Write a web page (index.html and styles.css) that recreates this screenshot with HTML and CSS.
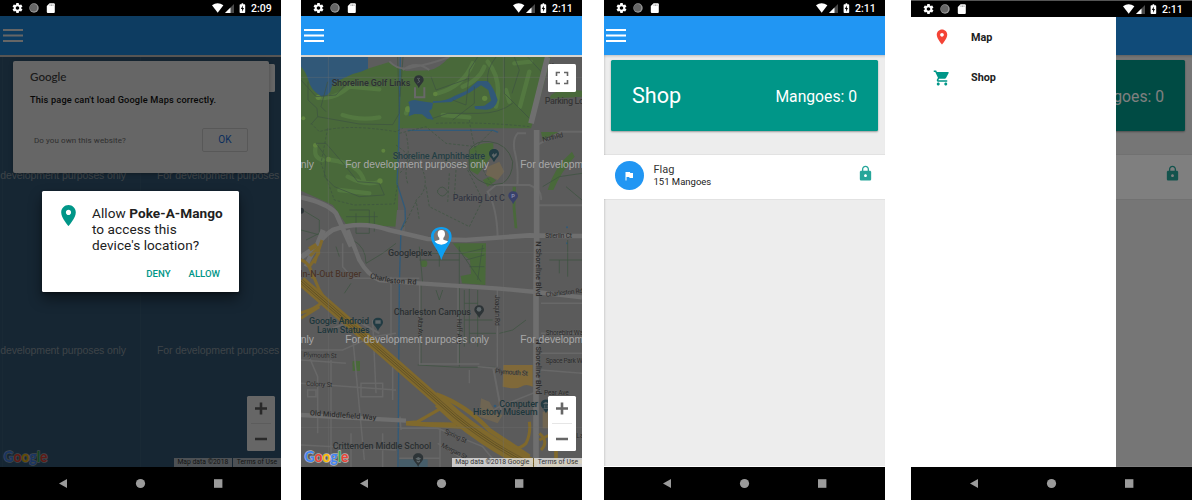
FILE: index.html
```html
<!DOCTYPE html>
<html lang="en">
<head>
<meta charset="utf-8">
<title>Poke-A-Mango</title>
<link rel="stylesheet" href="styles.css">
</head>
<body>
<svg class="defs" width="0" height="0" aria-hidden="true">
  <symbol id="gear" viewBox="0 0 24 24"><path d="M19.43 12.98c.04-.32.07-.64.07-.98s-.03-.66-.07-.98l2.11-1.65c.19-.15.24-.42.12-.64l-2-3.46c-.12-.22-.39-.3-.61-.22l-2.49 1c-.52-.4-1.08-.73-1.69-.98l-.38-2.65C14.46 2.18 14.25 2 14 2h-4c-.25 0-.46.18-.49.42l-.38 2.65c-.61.25-1.17.59-1.69.98l-2.49-1c-.23-.09-.49 0-.61.22l-2 3.46c-.13.22-.07.49.12.64l2.11 1.65c-.04.32-.07.65-.07.98s.03.66.07.98l-2.11 1.65c-.19.15-.24.42-.12.64l2 3.46c.12.22.39.3.61.22l2.49-1c.52.4 1.08.73 1.69.98l.38 2.65c.03.24.24.42.49.42h4c.25 0 .46-.18.49-.42l.38-2.65c.61-.25 1.17-.59 1.69-.98l2.49 1c.23.09.49 0 .61-.22l2-3.46c.12-.22.07-.49-.12-.64l-2.11-1.65zM12 15.5c-1.93 0-3.5-1.57-3.5-3.5s1.57-3.5 3.5-3.5 3.5 1.57 3.5 3.5-1.57 3.5-3.5 3.5z"/></symbol>
  <symbol id="status-left" viewBox="0 0 60 16">
    <use href="#gear" x="11.5" y="2" width="12" height="12" fill="#fff"/>
    <circle cx="34" cy="8" r="4.700" fill="#9a9a9a"/><circle cx="33.600" cy="7.800" r="3.700" fill="#666"/>
    <path d="M49.600 3.200h4.200q1 0 1 1v7.800q0 1-1 1h-6q-1 0-1-1V6z" fill="#fff"/>
    <path d="M50 4.400v1.600M51.500 4.400v1.600M53 4.400v1.600" stroke="#777" stroke-width=".6"/>
  </symbol>
  <symbol id="status-right" viewBox="0 0 38 16">
    <path d="M0 5.200Q5.600 1.400 11.400 5.200L5.700 12.800z" fill="#fff"/>
    <path d="M13 13L22 4v9z" fill="#4a4a4a"/><path d="M13 13L18.500 7.500V13z" fill="#fff"/>
    <path d="M29.600 3.200h1.600v1h1.200q.8 0 .8.8v7.200q0 .8-.8.8h-4q-.8 0-.8-.8V5q0-.8.8-.8h1.200z" fill="#fff"/>
    <path d="M30.900 5.400L28.800 9h1.300v2.700L32 8h-1.200z" fill="#000"/>
  </symbol>
  <symbol id="place" viewBox="0 0 24 24"><path d="M12 2C8.13 2 5 5.13 5 9c0 5.25 7 13 7 13s7-7.75 7-13c0-3.87-3.13-7-7-7zm0 9.5c-1.38 0-2.5-1.12-2.5-2.5s1.12-2.5 2.5-2.5 2.5 1.12 2.5 2.5-1.12 2.5-2.5 2.5z"/></symbol>
  <symbol id="cart" viewBox="0 0 24 24"><path d="M7 18c-1.1 0-1.99.9-1.99 2S5.9 22 7 22s2-.9 2-2-.9-2-2-2zM1 2v2h2l3.6 7.59-1.35 2.45c-.16.28-.25.61-.25.96 0 1.1.9 2 2 2h12v-2H7.42c-.14 0-.25-.11-.25-.25l.03-.12.9-1.63h7.45c.75 0 1.41-.41 1.75-1.03l3.58-6.49c.08-.14.12-.31.12-.48 0-.55-.45-1-1-1H5.21l-.94-2H1zm16 16c-1.1 0-1.99.9-1.99 2s.89 2 1.99 2 2-.9 2-2-.9-2-2-2z"/></symbol>
  <symbol id="lock" viewBox="0 0 24 24"><path d="M18 8h-1V6c0-2.76-2.24-5-5-5S7 3.24 7 6v2H6c-1.1 0-2 .9-2 2v10c0 1.1.9 2 2 2h12c1.1 0 2-.9 2-2V10c0-1.1-.9-2-2-2zm-6 9c-1.1 0-2-.9-2-2s.9-2 2-2 2 .9 2 2-.9 2-2 2zm3.1-9H8.9V6c0-1.71 1.39-3.1 3.1-3.1 1.71 0 3.1 1.39 3.1 3.1v2z"/></symbol>
  <symbol id="flag" viewBox="0 0 24 24"><path d="M14.4 6L14 4H5v17h2v-7h5.6l.4 2h7V6z"/></symbol>
  <symbol id="menu" viewBox="0 0 20 14"><path d="M0 1h20M0 6.5h20M0 12h20" stroke="#fff" stroke-width="2"/></symbol>
  <symbol id="nav" viewBox="0 0 281 33">
    <path d="M59 16.500L67 12v9z"/><circle cx="140.500" cy="16.500" r="4.600"/><path d="M214 12.200h8.400v8.600h-8.400z"/>
  </symbol>
  <symbol id="pin" viewBox="0 0 32 40"><path d="M16 0C7 0 1 6 1 14C1 23 11 27 16 40C21 27 31 23 31 14C31 6 25 0 16 0z"/></symbol>
</svg>

<main class="gallery">

  <section class="phone phone-permission">
    <header class="status"><svg class="status-left"><use href="#status-left"/></svg><svg class="status-right"><use href="#status-right"/></svg><span class="clock">2:09</span></header>
    <div class="screen">
      <div class="appbar"><svg class="menu"><use href="#menu"/></svg></div>
      <div class="map map-blank">
        <svg class="map-art" viewBox="0 57 281 410">
          <path d="M2.500 57v410M140.500 57v410" stroke="#456b8b" stroke-width=".6"/>
          <g class="watermark">
            <text x="-18" y="178.500" textLength="144">For development purposes only</text>
            <text x="157" y="178.500" textLength="144">For development purposes only</text>
            <text x="-18" y="353.500" textLength="144">For development purposes only</text>
            <text x="157" y="353.500" textLength="144">For development purposes only</text>
          </g>
        </svg>
        <div class="control fullscreen"></div>
        <div class="control zoomer"><svg viewBox="0 0 28 55"><path d="M8 12.500h12M14 6.500v12M8 43h12" stroke="#666" stroke-width="2.600"/><path d="M4 27.500h20" stroke="#e6e6e6"/></svg></div>
        <div class="error">
          <div class="error-brand">Google</div>
          <div class="error-title">This page can't load Google Maps correctly.</div>
          <div class="error-foot"><span>Do you own this website?</span><span class="ok">OK</span></div>
        </div>
        <svg class="logo" viewBox="0 0 48 20"><text x="1.500" y="14.500" textLength="44" lengthAdjust="spacingAndGlyphs"><tspan fill="#4285f4">G</tspan><tspan fill="#ea4335">o</tspan><tspan fill="#fbbc05">o</tspan><tspan fill="#4285f4">g</tspan><tspan fill="#34a853">l</tspan><tspan fill="#ea4335">e</tspan></text></svg>
        <div class="legal"><span>Map data ©2018</span><span>Terms of Use</span></div>
      </div>
      <div class="shade shade-deep">
        <div class="permission">
          <svg class="permission-icon"><use href="#place"/></svg>
          <p class="question">Allow <b>Poke-A-Mango</b><br>to access this<br>device's location?</p>
          <div class="actions"><span>DENY</span><span>ALLOW</span></div>
        </div>
      </div>
    </div>
    <footer class="navbar"><svg><use href="#nav"/></svg></footer>
  </section>

  <section class="phone phone-map">
    <header class="status"><svg class="status-left"><use href="#status-left"/></svg><svg class="status-right"><use href="#status-right"/></svg><span class="clock">2:11</span></header>
    <div class="screen">
      <div class="appbar"><svg class="menu"><use href="#menu"/></svg></div>
      <div class="map">
        <svg class="map-art" viewBox="15 171 843 1230">
          <rect x="15" y="171" width="843" height="1230" fill="#5b5b5b"/>
          <!-- parks -->
          <g fill="#49693a">
            <path d="M15 171H765L735 285L705 385H310L305 680L150 672L110 615L15 572z"/>
            <path d="M765 285Q790 265 858 272V290L760 296z"/>
            <path d="M522 450Q550 425 592 430L592 462L545 524L524 512Q512 480 522 450zM560 540L585 528L600 542L575 560z"/>
            <path d="M650 560h10l-2 60 6 65h-8l-6-60zM755 570Q775 500 828 455L836 470Q795 515 772 570z"/>
            <path d="M470 730H570L568 855L498 850L494 828L525 822L522 780L495 760z"/>
            <path d="M735 396H790L740 420zM170 1083h22v30h-22z"/>
            <circle cx="384" cy="791" r="10"/><circle cx="180" cy="1092" r="10"/>
          </g>
          <path d="M303 630h24v65h-30z" fill="#606060"/>
          <path d="M215 171H460Q430 205 400 211L330 213Q300 200 280 186L215 206z" fill="#5d5d5d"/>
          <g fill="none" stroke="#537840" stroke-width="13" stroke-linecap="round">
            <path d="M70 293Q115 300 160 260L250 268M140 345Q190 362 250 352M425 280Q500 260 530 190M565 200Q550 240 500 260M575 185Q620 240 600 320M700 215L672 320M655 190L705 185M60 435Q50 475 80 480M105 480Q190 490 205 545M130 570L220 580M155 530Q210 560 250 545M330 340L335 325M440 345L520 352M630 270L640 305"/>
          </g>
          <g fill="#5f843f"><circle cx="67" cy="292" r="8"/><circle cx="336" cy="328" r="9"/><circle cx="566" cy="295" r="8"/><circle cx="58" cy="436" r="7"/><circle cx="97" cy="478" r="8"/><circle cx="252" cy="543" r="8"/><circle cx="418" cy="282" r="7"/><circle cx="22" cy="355" r="6"/><circle cx="262" cy="452" r="6"/></g>
          <!-- water -->
          <g fill="#315878">
            <path d="M15 171H216V206Q200 214 170 222L125 243Q105 255 103 275Q85 298 70 285Q45 270 38 243Q30 215 15 200z"/>
            <path d="M337 306Q350 296 368 302L392 306L411 308L408 326L399 333L413 359L394 356L378 343L356 342L338 349Q345 325 337 306z"/>
            <path d="M411 303Q450 305 475 288L510 273L545 243L575 243Q595 265 605 300Q598 330 570 329L538 327L535 319L565 317L586 302L577 270L555 256L520 278L465 306L411 309z"/>
          </g>
          <path d="M313 171L308 440L303 550L327 625L328 660L315 690L310 850L306 1401" fill="none" stroke="#315a79" stroke-width="4"/>
          <path d="M335 391H592L606 397" stroke="#315a79" stroke-width="4" fill="none"/>
          <g fill="#315a79"><circle cx="813" cy="682" r="3"/><circle cx="813" cy="730" r="3"/><circle cx="597" cy="1218" r="4"/></g>
          <!-- trails -->
          <g fill="none" stroke="#3e5340" stroke-width="2.200">
            <path d="M36 245V300L63 325L65 350L45 373M65 350L190 372L290 374L310 340L305 171M95 245L75 320L90 335M15 240L60 290L120 285L160 240M321 171L312 290M470 300L510 315L520 210L545 171M405 230L420 270L520 235M535 260L535 310L470 360M600 171Q570 210 575 245M625 171V280L705 360M655 171L670 210L648 280M695 171L745 225L715 330M410 355L455 340L550 340Q610 340 650 310"/>
            <path stroke-dasharray="8 5" d="M45 370L70 395Q150 370 300 395L320 385M95 385L75 490L115 600L175 615L295 612L305 550M310 400L390 380L450 430L540 440L590 390M330 400Q350 490 310 520M300 435L370 490Q410 560 360 600L370 660M390 560L400 620L520 680L560 600L510 500L440 480M460 520L455 610M480 510L475 590M520 360Q540 500 595 560M420 370Q560 365 700 380M335 550Q320 500 350 470M360 605L320 685"/>
            <path d="M425 570Q440 550 455 575Q440 600 425 578zM160 630L220 630V700H180V640M235 635v60M150 650h95M60 430L90 470L85 530L115 560L190 590L265 585L250 550L185 545L150 500L90 430z"/>
            <path d="M170 720Q210 740 210 790L260 760L300 730M370 740L380 850M395 760H500M370 780H490M430 750V800M490 740V1100M375 850V1095M420 870L430 900L440 870M505 870V1040M520 860V1030M545 870V1040M505 910H545M505 960H590M520 1000H600M560 735L545 840M500 760L565 745M510 780L565 765M520 800L565 800M490 750L555 845M20 630L70 660V700L30 720M15 690L90 710M120 740L130 770M145 880L165 850M610 1000L650 990L690 960M760 780H858M815 720V830M790 780V820M740 560L790 530L858 520M810 560L858 600M365 1095L490 1102H598"/>
          </g>
          <!-- local roads -->
          <g fill="none" stroke="#686868" stroke-width="6">
            <path d="M280 184Q310 215 350 202Q410 190 460 171M320 210Q360 180 400 210M357 262v30h28v-30"/>
            <path d="M690 400H665Q650 415 655 450Q668 500 664 555H600L575 575Q602 620 605 710M722 436L795 395H858M664 555H700Q740 570 735 600M722 616H858"/>
            <path d="M371 852V1092H550M486 855V1095M604 870V1100M140 730V800L170 835H370M285 830V1030M15 1050H140L230 1010L300 1000M15 1080L150 1090M170 1010L205 1380M230 960L240 1180M15 1150L300 1170M105 1080V1401M35 1060L65 1130V1300M195 1190H260V1150H195zM35 1170h25v20H35zM290 1080V1200M600 1105L545 1100M315 1285H425L560 1340L610 1401M432 1285V1401M425 1330L540 1401M315 1290L312 1250M520 1110V1150M735 1170L610 1220L560 1250M735 910H858M735 1000H858M735 1060H858M735 1110L858 1120M310 1375H430M15 1335L300 1350M165 1300V1401M260 1300V1401" stroke-width="4.500"/>
            <path d="M592 1105L615 1230M110 985L180 960L250 1000"/>
          </g>
          <g fill="none" stroke="#6f6f6f" stroke-width="14">
            <path d="M15 592Q95 610 120 640L165 740M30 800Q60 720 110 690Q190 660 280 690L395 717L510 720L700 706L810 708H858"/>
            <path d="M755 171L705 370M722 390V720L720 880V1401" stroke-width="17"/>
            <path d="M155 690L190 780Q215 825 250 840L370 850L600 865L720 876L858 892M15 1245L330 1262" stroke-width="13"/>
            <path d="M15 772L62 740L82 690" stroke-width="16"/>
          </g>
          <!-- buildings -->
          <g fill="#78694f"><path d="M575 500L610 485L625 515L605 540L570 525z" opacity=".7"/><path d="M622 1095H710V1160Q690 1150 675 1160Q660 1170 620 1160z" fill="#806939"/><path d="M555 1195L580 1205L600 1240L620 1245L605 1270L550 1250z" opacity=".7"/><path d="M740 1235h30v50h-30z" opacity=".8"/></g>
          <path d="M520 450Q540 420 580 425Q635 430 650 485Q650 530 620 550L585 555Q540 545 520 510z" fill="none" stroke="#3e5340" stroke-width="2.500"/>
          <path d="M310 1378h85v23h-85z" fill="#465d69"/>
          <!-- freeway -->
          <g fill="none" stroke="#80692c" stroke-width="9">
            <path d="M42 768L68 742L68 760L40 800L70 870L110 935M15 780Q45 790 50 835M15 938Q55 930 80 905M15 955L70 920M78 720L55 790"/>
            <path d="M330 1268L365 1265L440 1222M330 1270L480 1272M330 1272L545 1285M700 1265Q705 1300 690 1330Q670 1350 640 1345M730 1300Q760 1325 735 1350M730 1320L760 1305"/>
            <path d="M40 748L62 735" stroke-width="14"/>
            <path d="M15 843L330 1118L480 1250Q590 1340 720 1401" stroke-width="29"/>
            <path d="M420 1183Q510 1215 580 1290L700 1370" stroke-width="13"/>
            <path d="M430 1205L480 1250Q590 1340 720 1401" stroke-width="40"/>
            <path d="M15 843L330 1118L480 1250Q590 1340 720 1401" stroke="#66562a" stroke-width="14"/>
            <path d="M15 843L330 1118L480 1250Q590 1340 720 1401" stroke="#80692c" stroke-width="9"/>
            <path d="M15 843L330 1118L480 1250Q590 1340 720 1401" stroke="#5d4f25" stroke-width="3"/>
            <path d="M735 1400L858 1385M780 1350V1401" stroke-width="11"/>
          </g>
          <path d="M97 171V1401M622 171V1401M15 232H858M15 757H858M15 1282H858" stroke="#727272" stroke-width="1.500" opacity=".7"/>
          <!-- places -->
          <g fill="#2d3437">
            <use href="#pin" x="353" y="225" width="31" height="40"/>
            <use href="#pin" x="578" y="446" width="32" height="42" fill="#213b43"/><use href="#pin" x="636" y="572" width="31" height="42" fill="#39406a"/>
            <use href="#pin" x="534" y="914" width="31" height="42"/><use href="#pin" x="230" y="952" width="32" height="42" fill="#213b43"/>
            <use href="#pin" x="733" y="1198" width="34" height="43" fill="#213b43"/><use href="#pin" x="350" y="1359" width="33" height="42"/>
            <circle cx="15" cy="632" r="9"/><path d="M420 750l12 12v-22z"/>
          </g>
          <g fill="#5e676a"><circle cx="549" cy="928" r="7"/><path d="M587 465l7-6v5l8-6v8l-9 8zM238 961h16v10h-16zM742 1213h16v-3l-8-5-8 5zm2 3h2v7h-2zm5 0h2v7h-2zm5 0h2v7h-2zm-12 8h16v2h-16zM358 1376l9-5 9 5-9 5zm4 5l5 3 5-3v4l-5 3-5-3z"/><path d="M363 235h8l-5 5 6 4-8 5" fill="none" stroke="#687070" stroke-width="2"/></g>
          <text x="646" y="593" font-family="Roboto, sans-serif" font-size="17" font-weight="700" fill="#858aab">P</text>
          <g class="place-names">
            <text x="107" y="257" textLength="236">Shoreline Golf Links</text>
            <text x="290" y="477" textLength="277" fill="#243e44">Shoreline Amphitheatre</text>
            <text x="470" y="603" textLength="157" fill="#343743">Parking Lot C</text>
            <text x="746" y="312" textLength="118" fill="#353535">Parking Lo</text>
            <text x="276" y="768" textLength="132">Googleplex</text>
            <text x="12" y="831" textLength="184" fill="#49352b">In-N-Out Burger</text>
            <text x="293" y="946" textLength="232">Charleston Campus</text>
            <text x="39" y="971" textLength="180" fill="#1d363b">Google Android</text>
            <text x="63" y="998" textLength="158" fill="#1d363b">Lawn Statues</text>
            <text x="610" y="1220" textLength="116" fill="#1d363b">Computer</text>
            <text x="531" y="1245" textLength="194" fill="#1d363b">History Museum</text>
            <text x="110" y="1347" textLength="296">Crittenden Middle School</text>
          </g>
          <g class="street-names">
            <text class="major" transform="translate(221 834) rotate(13)" textLength="62">Charle</text>
            <text class="major" transform="translate(281 849) rotate(3)" textLength="80">ston Rd</text>
            <text class="major" transform="translate(41 1246) rotate(4)" textLength="200">Old Middlefield Way</text>
            <text class="major" transform="translate(719 724) rotate(90)" textLength="165">N Shoreline Blvd</text>
            <text class="major" transform="translate(719 1018) rotate(90)" textLength="165">N Shoreline Blvd</text>
            <text transform="translate(741 425) rotate(-13)" textLength="63">North Rd</text>
            <text x="748" y="713" textLength="80">Stierlin Ct</text>
            <text transform="translate(750 890) rotate(-6)" textLength="112">Charleston Rd</text>
            <text transform="translate(598 885) rotate(90)" textLength="92">Joaquin Rd</text>
            <text transform="translate(365 950) rotate(90)" textLength="65">Alta Ave</text>
            <text transform="translate(482 957) rotate(90)" textLength="76">Huff Ave</text>
            <text x="749" y="1006" textLength="112">Shorebird Wa</text>
            <text x="749" y="1089" textLength="111">Space Park W</text>
            <text transform="translate(22 1071) rotate(2)" textLength="100">Plymouth St</text>
            <text transform="translate(30 1157) rotate(3)" textLength="79">Colony St</text>
            <text transform="translate(597 1120) rotate(4)" textLength="98">Plymouth St</text>
            <text x="744" y="1184" textLength="74">Pear Ave</text>
            <text transform="translate(444 1298) rotate(26)" textLength="72">Spring St</text>
            <text transform="translate(434 1340) rotate(27)" textLength="84">Morgan St</text>
            <text x="762" y="189" transform="rotate(85 762 189)" textLength="55" class="minor">Shoreline</text>
            <text x="841" y="1315">La</text>
          </g>
          <g class="watermark watermark-big">
            <text x="-377" y="505" textLength="431">For development purposes only</text>
            <text x="148" y="505" textLength="431">For development purposes only</text>
            <text x="673" y="505" textLength="431">For development purposes only</text>
            <text x="-377" y="1030" textLength="431">For development purposes only</text>
            <text x="148" y="1030" textLength="431">For development purposes only</text>
            <text x="673" y="1030" textLength="431">For development purposes only</text>
          </g>
          <!-- player marker -->
          <path d="M436 681C418 681 405 693 405 709C405 732 426 748 436 780C446 748 467 732 467 709C467 693 454 681 436 681z" fill="#0d9ff2"/>
          <circle cx="436" cy="710" r="23" fill="#777"/>
          <path d="M436 690c-8 0-11 5-11 12 0 6 3 9 5 12v5l-14 5q7 10 20 10t20-10l-14-5v-5c2-3 5-6 5-12 0-7-3-12-11-12z" fill="#fff"/>
        </svg>
        <div class="control fullscreen"><svg viewBox="0 0 28 28"><path d="M8.500 12V8.500H12M16 8.500h3.500V12M19.500 16v3.500H16M12 19.500H8.500V16" fill="none" stroke="#666" stroke-width="1.600"/></svg></div>
        <div class="control zoomer"><svg viewBox="0 0 28 55"><path d="M8 12.500h12M14 6.500v12M8 43h12" stroke="#666" stroke-width="2.600"/><path d="M4 27.500h20" stroke="#e6e6e6"/></svg></div>
        <svg class="logo" viewBox="0 0 48 20"><text x="1.500" y="14.500" textLength="44" lengthAdjust="spacingAndGlyphs"><tspan fill="#4285f4">G</tspan><tspan fill="#ea4335">o</tspan><tspan fill="#fbbc05">o</tspan><tspan fill="#4285f4">g</tspan><tspan fill="#34a853">l</tspan><tspan fill="#ea4335">e</tspan></text></svg>
        <div class="legal"><span>Map data ©2018 Google</span><span>Terms of Use</span></div>
      </div>
    </div>
    <footer class="navbar"><svg><use href="#nav"/></svg></footer>
  </section>

  <section class="phone phone-shop">
    <header class="status"><svg class="status-left"><use href="#status-left"/></svg><svg class="status-right"><use href="#status-right"/></svg><span class="clock">2:11</span></header>
    <div class="screen">
      <div class="appbar"><svg class="menu"><use href="#menu"/></svg></div>
      <div class="shop">
        <div class="banner"><span class="banner-title">Shop</span><span class="banner-count">Mangoes: 0</span></div>
        <div class="item"><span class="avatar"><svg><use href="#flag"/></svg></span><div class="item-text"><span class="item-name">Flag</span><span class="item-cost">151 Mangoes</span></div><svg class="lock"><use href="#lock"/></svg></div>
      </div>
    </div>
    <footer class="navbar"><svg><use href="#nav"/></svg></footer>
  </section>

  <section class="phone phone-drawer">
    <header class="status"><svg class="status-left"><use href="#status-left"/></svg><svg class="status-right"><use href="#status-right"/></svg><span class="clock">2:11</span></header>
    <div class="screen">
      <div class="appbar"></div>
      <div class="shop">
        <div class="banner"><span class="banner-count">Mangoes: 0</span></div>
        <div class="item"><svg class="lock"><use href="#lock"/></svg></div>
      </div>
      <div class="shade"></div>
      <nav class="drawer">
        <a class="entry entry-map"><svg><use href="#place"/></svg><span>Map</span></a>
        <a class="entry entry-shop"><svg><use href="#cart"/></svg><span>Shop</span></a>
      </nav>
    </div>
    <footer class="navbar"><svg><use href="#nav"/></svg></footer>
  </section>
</main>
</body>
</html>
```

FILE: styles.css
```css
* { box-sizing: border-box; }
body { margin: 0; background: #fff; font-family: Roboto, "Liberation Sans", sans-serif; color: #212121; overflow: hidden; }
.defs { position: absolute; }
.gallery { display: flex; width: 1192px; height: 500px; }
.phone { width: 281px; height: 500px; flex: none; display: flex; flex-direction: column; }
.phone-map { margin-left: 20px; }
.phone-shop { margin-left: 22px; }
.phone-drawer { margin-left: 26px; }

.status { height: 16px; background: #000; display: flex; flex: none; }
.status-left { width: 60px; height: 16px; }
.status-right { width: 38px; height: 16px; margin-left: 152px; }
.clock { color: #fff; font-size: 10.5px; font-weight: 500; line-height: 17px; margin-left: 1px; white-space: nowrap; }
.phone-drawer .status { height: 17px; border-top: 1px solid #555; }

.screen { position: relative; flex: 1; min-height: 0; display: flex; flex-direction: column; overflow: hidden; }
.appbar { height: 39px; flex: none; background: #2196f3; padding: 13px 3px; }
.menu { display: block; width: 20px; height: 14px; }
.phone-shop .menu { margin-left: -1px; }
.phone-drawer .appbar { height: 38px; }
.navbar { height: 33px; flex: none; background: #000; }
.navbar svg { display: block; width: 281px; height: 33px; fill: #9b9b9b; }

.map { position: relative; flex: 1; min-height: 0; border-top: 2px solid #d9d5cf; overflow: hidden; }
.map-blank { background: #375f7f; }
.map-art { display: block; width: 281px; height: 410px; }
.watermark { font-family: "Liberation Sans", Arial, sans-serif; font-size: 10.5px; fill: #9aa8b3; }
.watermark-big { font-size: 31px; fill: #a8a8a8; }
.place-names { font-size: 27px; font-weight: 500; fill: #2b3032; stroke: #666; stroke-opacity: .3; stroke-width: 3px; paint-order: stroke; }
.street-names { font-size: 20px; fill: #2c2c2c; stroke: #666; stroke-opacity: .4; stroke-width: 3px; paint-order: stroke; }
.major { font-size: 22px; font-weight: 500; }
.minor { font-size: 16px; }

.control { position: absolute; right: 6px; width: 28px; background: #fff; border-radius: 1.5px; }
.control svg { display: block; width: 100%; height: 100%; }
.fullscreen { top: 7px; height: 28px; }
.zoomer { bottom: 16px; height: 55px; }
.logo { position: absolute; left: 2px; bottom: 0; width: 48px; height: 20px; font-family: Lato, sans-serif; font-weight: 700; font-size: 15.5px; }
.logo text { stroke: #e8e8e8; stroke-opacity: .6; stroke-width: 1.5px; stroke-linejoin: round; paint-order: stroke; }
.legal { position: absolute; right: 0; bottom: 0; height: 9px; display: flex; gap: 1px; font-size: 6.8px; line-height: 9px; color: #333; white-space: nowrap; }
.legal span { background: rgba(245, 245, 245, .72); padding: 0 4px 0 3.5px; }

.error { position: absolute; left: 13px; top: 4px; width: 256px; height: 112px; background: #fff; border-radius: 2px; padding: 9px 21px 0 17px; box-shadow: 0 1px 4px rgba(0, 0, 0, .3); }
.error-brand { font-family: Lato, sans-serif; font-size: 11.6px; font-weight: 500; line-height: 14px; color: #444; }
.error-title { margin-top: 9px; font-size: 9.2px; line-height: 14px; font-weight: 500; color: #111; white-space: nowrap; letter-spacing: .18px; }
.error-foot { display: flex; justify-content: space-between; align-items: center; margin-top: 21px; padding-left: 4px; font-size: 8px; letter-spacing: .08px; color: #777; }
.ok { width: 46px; height: 24px; border: 1px solid #ddd; border-radius: 2px; font-size: 10px; line-height: 22px; text-align: center; color: #1a73e8; }

.shade { position: absolute; inset: 0; background: rgba(0, 0, 0, .5); }
.shade-deep { background: rgba(0, 0, 0, .6); padding: 175px 42px; }
.permission { display: grid; grid-template-columns: 50px 1fr; grid-template-rows: 61px 1fr; width: 197px; height: 101px; background: #fff; border-radius: 1.5px; box-shadow: 0 7px 14px rgba(0, 0, 0, .45), 0 1px 3px rgba(0, 0, 0, .4); }
.permission-icon { width: 25px; height: 25px; margin: 12px 0 0 14px; fill: #009688; }
.question { margin: 14px 0 0; font-size: 13.6px; line-height: 16px; white-space: nowrap; letter-spacing: .06px; }
.question b { font-weight: 700; }
.actions { grid-column: 1 / 3; display: flex; justify-content: flex-end; gap: 18px; padding: 15px 19px 0 0; font-size: 9.6px; line-height: 13px; font-weight: 500; color: #009688; }

.shop { flex: 1; background: #ededed; box-shadow: inset 0 3px 3px -2px rgba(0, 0, 0, .2), inset 2px 0 2px -1px rgba(0, 0, 0, .12); border-bottom: 1px solid #fff; }
.banner { height: 71px; margin: 4.5px 7px 24px; display: flex; align-items: center; background: #009688; color: #fff; border-radius: 1.5px; padding: 0 21px; box-shadow: 0 1px 2px rgba(0, 0, 0, .35); }
.banner-title { font-size: 21.6px; line-height: 26px; margin-top: 1px; }
.banner-count { font-size: 15.7px; line-height: 20px; margin: 3px 0 0 auto; }
.item { height: 44.5px; display: flex; background: #fff; padding: 6.5px 13px 0 10.5px; box-shadow: 0 0 1px rgba(0, 0, 0, .25); }
.avatar { width: 29px; height: 29px; border-radius: 50%; background: #2196f3; padding: 8.5px; }
.avatar svg { display: block; width: 12px; height: 12px; fill: #fff; }
.item-text { display: flex; flex-direction: column; margin-left: 10px; }
.item-name { font-size: 11px; line-height: 15px; height: 14px; padding-top: .5px; color: #333; }
.item-cost { font-size: 9.5px; line-height: 13px; }
.lock { width: 17px; height: 17px; margin: 4px -2px 0 auto; fill: #26a69a; }

.drawer { position: absolute; left: 0; top: 0; bottom: 0; width: 205px; background: #fff; display: flex; flex-direction: column; }
.entry { display: flex; align-items: center; height: 40.5px; padding-left: 22px; }
.entry svg { width: 18px; height: 18px; margin-right: 20px; }
.entry span { font-size: 10.8px; font-weight: 700; }
.entry-map svg { fill: #f44336; }
.entry-shop svg { fill: #009688; }
```
